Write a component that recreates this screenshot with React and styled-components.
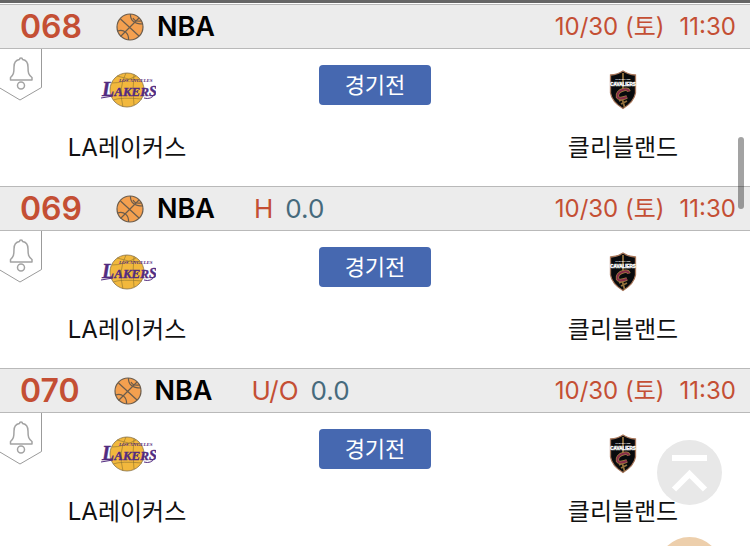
import React from "react";
import styled, { createGlobalStyle } from "styled-components";

const GlobalStyle = createGlobalStyle`
    * {
        box-sizing: border-box;
    }
    html {
        scrollbar-width: none;
    }
    body {
        margin: 0;
        background: #fff;
        color: #111;
        font-family: Inter, "Noto Sans CJK KR", sans-serif;
    }
`;

const PageStyles = styled.main`
    border-top: 3px solid #666;
    padding-top: 1px;
`;

const GameStyles = styled.article`
    .head {
        display: flex;
        align-items: center;
        height: 45px;
        padding: 0 14px 0 20px;
        background: #ececec;
        border-top: 1px solid #b9b9b9;
        border-bottom: 1px solid #b9b9b9;
        white-space: nowrap;
    }
    .body {
        display: grid;
        grid-template-columns: 1fr 242px 1fr;
        justify-items: center;
        position: relative;
        height: 137px;
        padding-top: 16px;
    }
`;

const GameNumber = styled.h2`
    margin: 0 34px 0 0;
    color: #c44f34;
    font-size: 32px;
    line-height: 40px;
    font-weight: 600;
`;

const League = styled.span`
    margin-left: 13px;
    color: #000;
    font-size: 27px;
    line-height: 40px;
    font-weight: 600;
`;

const Odds = styled.span`
    display: flex;
    gap: 12px;
    margin-left: 39px;
    color: #c44f34;
    font-size: 26px;
    line-height: 40px;
    font-weight: 400;
    b {
        color: #466a7c;
        font-weight: 400;
    }
`;

const GameTime = styled.time`
    display: flex;
    gap: 15px;
    margin-left: auto;
    color: #c44f34;
    font-size: 24px;
    line-height: 40px;
    font-weight: 400;
`;

const TeamStyles = styled.div`
    display: flex;
    flex-direction: column;
    align-items: center;
    gap: 15px;
    .logo {
        display: flex;
        align-items: center;
        justify-content: center;
        height: 50px;
    }
    .name {
        font-size: 24px;
        line-height: 36px;
    }
`;

const Status = styled.span`
    width: 112px;
    height: 40px;
    border-radius: 4px;
    background: #4668b0;
    color: #fff;
    font-family: "Noto Sans CJK KR", sans-serif;
    font-size: 22px;
    line-height: 36px;
    text-align: center;
`;

const AlarmButton = styled.button`
    position: absolute;
    top: 0;
    left: 0;
    padding: 0;
    border: none;
    background: none;
    cursor: pointer;
    svg {
        display: block;
    }
`;

const FloatStyles = styled.div`
    position: fixed;
    right: 28px;
    bottom: -56px;
    display: flex;
    flex-direction: column;
    gap: 32px;
`;

const RoundButton = styled.button`
    width: 65px;
    height: 65px;
    padding: 0;
    border: none;
    border-radius: 50%;
    background: ${(props) => props.$color};
    cursor: pointer;
    svg {
        display: block;
    }
`;

const ScrollThumb = styled.div`
    position: fixed;
    top: 137px;
    right: 6px;
    width: 6px;
    height: 72px;
    border-radius: 3px;
    background: rgba(0, 0, 0, 0.36);
`;

const BallIcon = () => (
    <svg width="28" height="28" viewBox="0 0 28 28" aria-hidden="true">
        <circle cx="14" cy="14" r="13" fill="#f4a04f" />
        <g fill="none" stroke="#6b5c4c" strokeWidth="1.2">
            <circle cx="14" cy="14" r="13" />
            <path d="M4.500 6 23 23M23 5 4.500 23.500" />
            <path d="M14.500 1C14 7 18 11 27 11M17 5Q19 9 25 8" />
            <path d="M1.500 18C8 16 13 20 12.500 27" />
        </g>
    </svg>
);

const BellIcon = () => (
    <svg width="43" height="52" viewBox="0 0 43 52" aria-hidden="true">
        <path
            d="M41.500 0V38.500L20 51 -1 38.500"
            fill="#fff"
            stroke="#9b9b9b"
        />
        <g fill="none" stroke="#a3a3a3" strokeWidth="1.500">
            <path
                d="M19.500 10.500C15.500 11 14 14 14 18C14 24 13.500 26 10.500 28.500V31H32V28.500C28.500 26 28 24 28 18C28 14 26 11 22.500 10.500Q22.500 9 21 9T19.500 10.500Z"
                strokeLinejoin="round"
            />
            <circle cx="21" cy="36.500" r="3.500" />
        </g>
    </svg>
);

const LakersLogo = () => (
    <svg
        width="58"
        height="38"
        viewBox="0 0 58 38"
        role="img"
        aria-label="Lakers"
    >
        <circle
            cx="29"
            cy="19"
            r="17"
            fill="#f2b83d"
            stroke="#86714b"
            strokeWidth=".8"
        />
        <path
            d="M14 12Q25 12 38 5M19 5Q31 9 42 9M28 2Q20 17 25 36M36 3Q34 20 36 34M15 29Q23 26 44 28"
            fill="none"
            stroke="#8c722f"
            strokeWidth=".6"
        />
        <g
            fontFamily="Liberation Serif, serif"
            fontStyle="italic"
            fontWeight="700"
            fill="#522b80"
        >
            <text
                x="4"
                y="25"
                fontSize="20"
                stroke="#522b80"
                strokeWidth=".4"
            >
                L<tspan fontSize="13">AKER</tspan>
                <tspan fontSize="14">S</tspan>
            </text>
            <text x="21" y="11" fontSize="5">
                LOS ANGELES
            </text>
        </g>
        <path
            d="M3 27 15 25M46 27Q53 29 57 23"
            fill="none"
            stroke="#522b80"
        />
    </svg>
);

const CavaliersLogo = () => (
    <svg
        width="28"
        height="40"
        viewBox="0 0 28 40"
        role="img"
        aria-label="Cavaliers"
    >
        <path
            d="M14 1Q19 4.500 26.500 5V23Q25 32 14 38.500Q3 32 1.500 23V5Q9 4.500 14 1Z"
            fill="#080a0d"
            stroke="#a8775b"
            strokeWidth="1.300"
        />
        <path
            d="M14 3V19M13 28 15.500 37M10 31 18 27M12 34 18 31"
            stroke="#93703c"
            strokeWidth="1.800"
        />
        <path
            d="M20 21.500Q19 18.500 15 19.500C10 20.500 7.500 24 8.500 27Q10 30 18 27"
            fill="none"
            stroke="#a08040"
            strokeWidth="3.500"
        />
        <path
            d="M20 21.500Q19 18.500 15 19.500C10 20.500 7.500 24 8.500 27Q10 30 18 27"
            fill="none"
            stroke="#882c49"
            strokeWidth="2"
        />
        <g
            fill="#fff"
            fontFamily="Liberation Sans, sans-serif"
            fontWeight="700"
            textAnchor="middle"
        >
            <text x="14" y="10" fontSize="2.500">
                CLEVELAND
            </text>
            <text
                x="14"
                y="16"
                fontSize="4.500"
                stroke="#fff"
                strokeWidth=".4"
            >
                CAVALIERS
            </text>
        </g>
    </svg>
);

const Team = ({ name, children }) => (
    <TeamStyles>
        <div className="logo">{children}</div>
        <div className="name">{name}</div>
    </TeamStyles>
);

const Game = ({ number, type, value }) => (
    <GameStyles>
        <div className="head">
            <GameNumber>{number}</GameNumber>
            <BallIcon />
            <League>NBA</League>
            {type && (
                <Odds>
                    {type} <b>{value}</b>
                </Odds>
            )}
            <GameTime>
                <span>10/30 (토)</span>
                <span>11:30</span>
            </GameTime>
        </div>
        <div className="body">
            <AlarmButton type="button" aria-label="알림">
                <BellIcon />
            </AlarmButton>
            <Team name="LA레이커스">
                <LakersLogo />
            </Team>
            <Status>경기전</Status>
            <Team name="클리블랜드">
                <CavaliersLogo />
            </Team>
        </div>
    </GameStyles>
);

const games = [
    { number: "068" },
    { number: "069", type: "H", value: "0.0" },
    { number: "070", type: "U/O", value: "0.0" },
];

const App = () => {
    return (
        <>
            <GlobalStyle />
            <PageStyles>
                {games.map((game) => (
                    <Game key={game.number} {...game} />
                ))}
            </PageStyles>
            <FloatStyles>
                <RoundButton
                    type="button"
                    $color="#e8e8e8"
                    aria-label="맨 위로"
                    onClick={() => window.scrollTo(0, 0)}
                >
                    <svg width="65" height="65" viewBox="0 0 65 65">
                        <path
                            d="M15 18H50M17 49.500 32.500 34 48 49.500"
                            fill="none"
                            stroke="#fff"
                            strokeWidth="6"
                        />
                    </svg>
                </RoundButton>
                <RoundButton
                    type="button"
                    $color="#edcfac"
                    aria-label="메뉴"
                />
            </FloatStyles>
            <ScrollThumb />
        </>
    );
};

export default App;
